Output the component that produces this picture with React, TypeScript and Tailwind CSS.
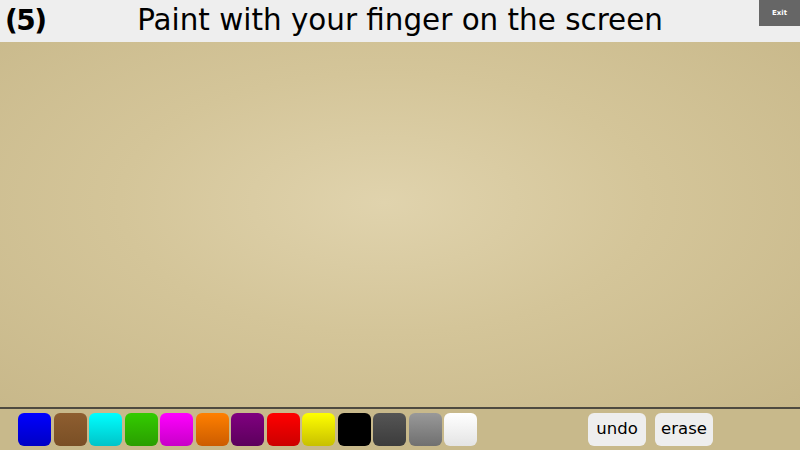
const swatches = [
  "from-[#0000ff] to-[#0000c4]",
  "from-[#8e5e30] to-[#7a4f25]",
  "from-[#00ffff] to-[#00c4c8]",
  "from-[#33cc00] to-[#2a9e00]",
  "from-[#ff00ff] to-[#c800c8]",
  "from-[#ff8000] to-[#cc5c00]",
  "from-[#800080] to-[#5c005c]",
  "from-[#ff0000] to-[#cc0000]",
  "from-[#ffff00] to-[#c8c000]",
  "from-[#000000] to-[#000000]",
  "from-[#555555] to-[#3c3c3c]",
  "from-[#999999] to-[#707070]",
  "from-[#ffffff] to-[#e4e4e4]",
]

export default function App() {
  return (
    <div className="flex h-[450px] w-[800px] flex-col overflow-hidden bg-[#c8b98b] font-['DejaVu_Sans',sans-serif]">
      {/* Header */}
      <div className="relative grid h-[42px] shrink-0 grid-cols-[1fr_auto_1fr] items-center bg-[#eeeeee]">
        <span className="ml-[5px] text-[28px] font-bold leading-none tracking-[-1.5px] text-black">(5)</span>
        <span className="text-[29.4px] leading-none text-black">Paint with your finger on the screen</span>
        <div />
        <div className="absolute right-0 top-0 flex h-[26px] w-[41px] items-center justify-center bg-[#666666] text-[7px] font-bold text-white">
          Exit
        </div>
      </div>

      {/* Canvas */}
      <div className="h-[365px] shrink-0 bg-[radial-gradient(ellipse_at_48%_44%,#e0d3ad_0%,#d4c599_45%,#c7b789_100%)]" />

      <div className="h-[2px] shrink-0 bg-[#4e4a40]" />

      {/* Palette */}
      <div className="flex flex-1 items-start pt-[4px]">
        <div className="ml-[18px] flex gap-[2.5px]">
          {swatches.map((s, i) => (
            <div key={i} className={`h-[33px] w-[33px] rounded-[6px] bg-gradient-to-b ${s}`} />
          ))}
        </div>
        <div className="ml-[111px] flex gap-[9px]">
          <div className="flex h-[33px] w-[58px] items-center justify-center rounded-[6px] bg-[#eeeeee] text-[16.5px] text-black">
            undo
          </div>
          <div className="flex h-[33px] w-[58px] items-center justify-center rounded-[6px] bg-[#eeeeee] text-[16.5px] text-black">
            erase
          </div>
        </div>
      </div>
    </div>
  )
}
